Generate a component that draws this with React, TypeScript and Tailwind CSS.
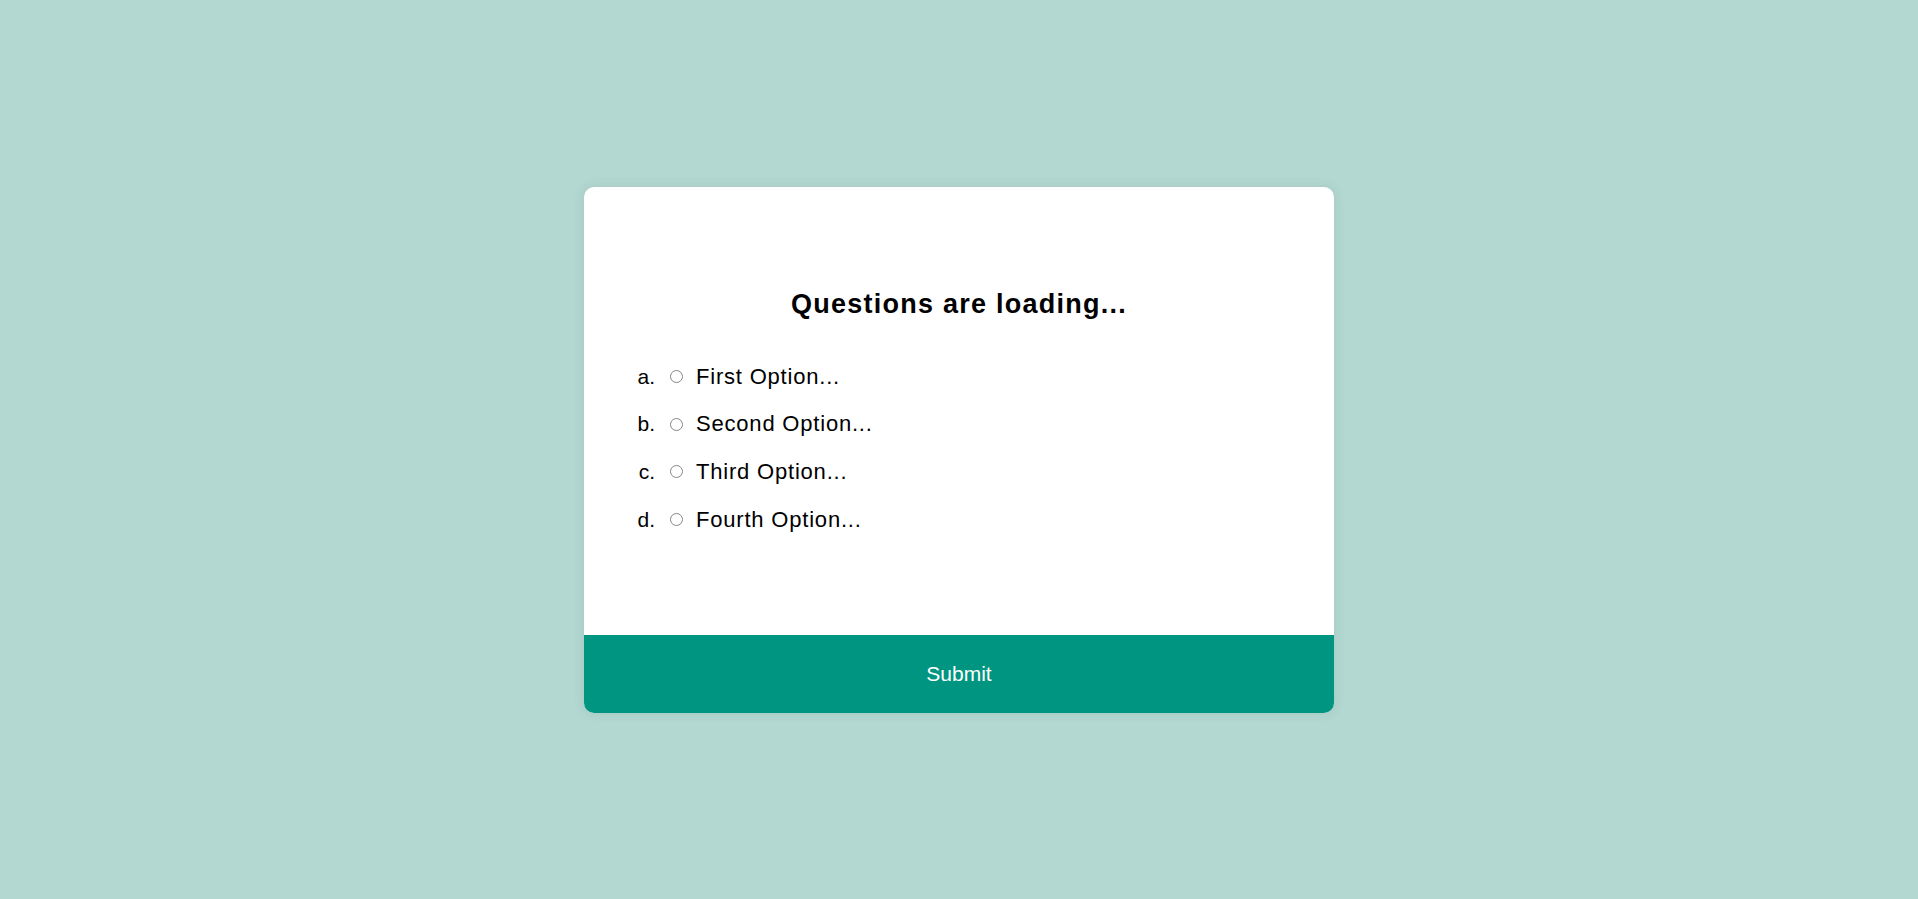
import { useState } from "react";

const options = [
    { key: "a", label: "First Option..." },
    { key: "b", label: "Second Option..." },
    { key: "c", label: "Third Option..." },
    { key: "d", label: "Fourth Option..." },
];

export default function App() {
    const [selected, setSelected] = useState<string | null>(null);

    return (
        <div className="h-screen w-full bg-[#b2d8d1] flex items-center justify-center font-['Liberation_Sans',Arial,sans-serif] text-black">
            <div className="w-[750px] bg-white rounded-[10px] overflow-hidden shadow-[0_0_10px_2px_rgba(100,100,100,0.1)]">
                {/* Question */}
                <div className="h-[448px] pt-[102px] pl-[51px]">
                    <h2 className="text-[27px] leading-[31px] font-bold tracking-[1.25px] text-center pr-[51px]">
                        Questions are loading...
                    </h2>
                    <ul className="mt-[45px] flex flex-col gap-[23.7px]">
                        {options.map((option) => (
                            <li key={option.key} className="flex items-center h-6 text-[21px] leading-6">
                                <span className="w-5 text-right">{option.key}.</span>
                                <button
                                    onClick={() => setSelected(option.key)}
                                    className="ml-[15px] w-[13px] h-[13px] rounded-full border border-[#858585] flex items-center justify-center"
                                >
                                    {selected === option.key && <span className="w-[7px] h-[7px] rounded-full bg-[#009580]" />}
                                </button>
                                <span className="ml-[13px] text-[22px] tracking-[0.8px]">{option.label}</span>
                            </li>
                        ))}
                    </ul>
                </div>
                <button className="w-full h-[78px] bg-[#009580] text-white text-[21px] flex items-center justify-center">
                    Submit
                </button>
            </div>
        </div>
    );
}
